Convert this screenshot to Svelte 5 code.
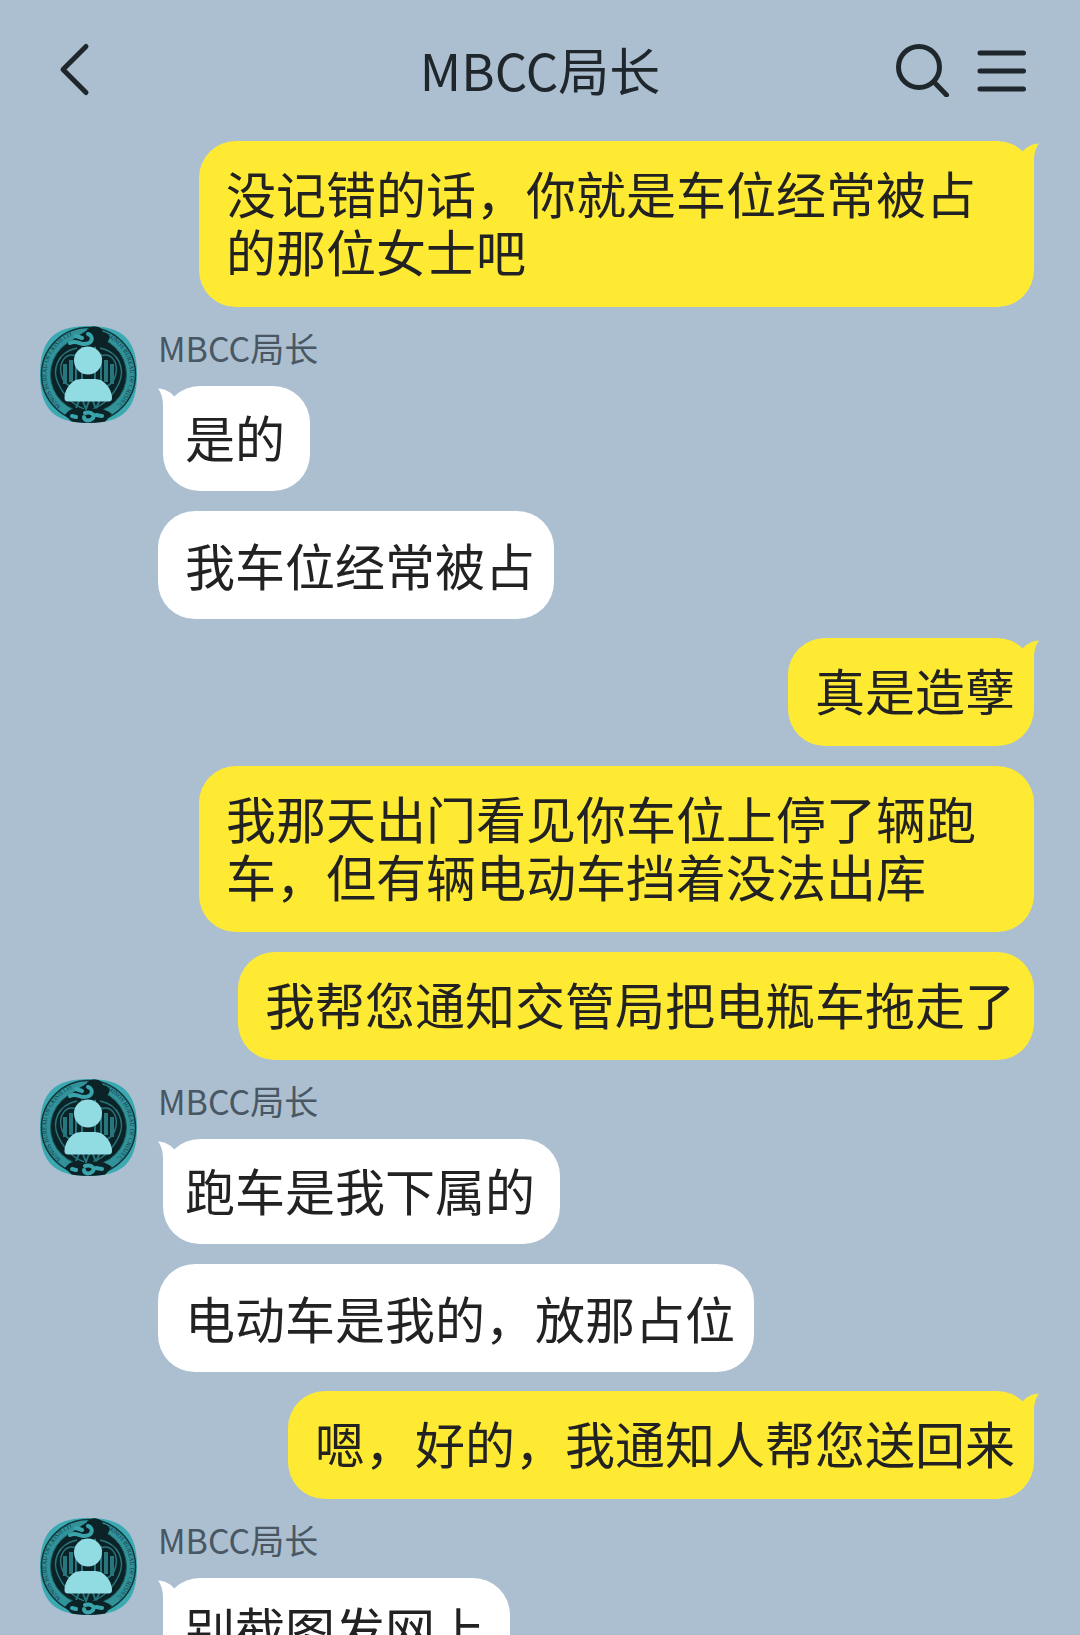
<script lang="ts">
  interface Group {
    from: "me" | "them";
    messages: string[];
  }

  const contact = "MBCC局长";

  const groups: Group[] = [
    { from: "me", messages: ["没记错的话，你就是车位经常被占的那位女士吧"] },
    { from: "them", messages: ["是的", "我车位经常被占"] },
    {
      from: "me",
      messages: [
        "真是造孽",
        "我那天出门看见你车位上停了辆跑车，但有辆电动车挡着没法出库",
        "我帮您通知交管局把电瓶车拖走了",
      ],
    },
    { from: "them", messages: ["跑车是我下属的", "电动车是我的，放那占位"] },
    { from: "me", messages: ["嗯，好的，我通知人帮您送回来"] },
    { from: "them", messages: ["别截图发网上"] },
  ];
</script>

<!-- shared avatar artwork -->
<svg class="sprite" aria-hidden="true">
  <defs>
    <clipPath id="squircle">
      <path d="M48.500 0C83 0 97 14 97 48.500S83 97 48.500 97 0 83 0 48.500 14 0 48.500 0Z" />
    </clipPath>
    <path id="arc-left" d="M21 80A42 42 0 0 1 31 10" />
    <path id="arc-right" d="M67 11A42 42 0 0 1 77 79" />
    <symbol id="avatar" viewBox="0 0 97 97">
      <g clip-path="url(#squircle)">
        <rect width="97" height="97" fill="#3ba9b1" />
        <circle cx="48.500" cy="48.500" r="47" fill="#31929a" stroke="#12353b" stroke-width="1.500" />
        <g class="motto">
          <text><textPath href="#arc-left">MINOS BUREAU OF CRISIS CONTROL</textPath></text>
          <text><textPath href="#arc-right">MINOS BUREAU OF CRISIS CONTROL</textPath></text>
        </g>
        <circle cx="48.500" cy="48.500" r="38" fill="#0b2226" stroke="#1b5a61" />
        <g fill="none" stroke="#27757d">
          <path stroke-width="4" d="M25 38v20M31 34v22M66 34v22M72 38v20" />
          <path
            stroke-width="1.500"
            d="M37 22C17 26 12 44 18 57S34 79 44 83M60 22C80 26 85 44 79 57S63 79 53 83M36 30C26 26 19 36 21 47S29 60 36 63M61 30C71 26 78 36 76 47S68 60 61 63"
          />
          <path stroke-width="2" d="M36 82l5-12 5 13 5-13 5 13 5-12M36 28v32M42 18v44M55 18v44M61 28v32" />
        </g>
        <path fill="#0b2226" d="M46 5c4-7 15-6 17 1 8 1 8 8 3 11-8 5-26 6-32 1-4-4 4-8 12-13ZM25 89c5-8 15-9 21-4 8-4 18-3 26 3l-9 10H34Z" />
        <g fill="none" stroke="#3aa4ad" stroke-width="4" stroke-linecap="round">
          <path d="M30 17c6-3 9 1 14 1 9 0 10-8 4-10M36 10l6 2" />
          <path d="M45 87c7-2 11 3 7 6s-8 1-8-2M36 91l-4-1M56 89l6 1" />
        </g>
        <g fill="#91dbe3">
          <circle cx="48" cy="34.500" r="14" />
          <path d="M41 53H55C65 53 72 64 72 72Q72 75.500 68.500 75.500H28Q24.500 75.500 24.500 72C24.500 64 31 53 41 53Z" />
        </g>
      </g>
    </symbol>
  </defs>
</svg>

<div class="chat">
  <header>
    <button class="back" aria-label="返回">
      <svg width="40" height="56" viewBox="0 0 40 56">
        <path d="M32 5.500 9 28.500l23 23" />
      </svg>
    </button>
    <h1>{contact}</h1>
    <div class="actions">
      <button aria-label="搜索">
        <svg width="56" height="56" viewBox="0 0 56 56">
          <circle cx="25" cy="26" r="20.500" />
          <path d="m40 41 12.500 13" />
        </svg>
      </button>
      <button aria-label="菜单">
        <svg width="52" height="56" viewBox="0 0 52 56">
          <path d="M6 12h43.500M6 30h43.500M6 48h43.500" />
        </svg>
      </button>
    </div>
  </header>

  <main>
    {#each groups as group}
      <section class="group {group.from}">
        {#if group.from === "them"}
          <svg class="avatar" role="img" aria-label={contact}><use href="#avatar" /></svg>
        {/if}
        <div class="messages">
          {#if group.from === "them"}
            <div class="name">{contact}</div>
          {/if}
          {#each group.messages as message, i}
            <p class="bubble" class:first={i === 0}>
              {message}
              {#if i === 0}
                <svg class="tail" width="25" height="40" viewBox="0 0 25 40" aria-hidden="true">
                  <path d="M8 11.500C12 6 18 3 25 2.500 21 8 20 14 20 20V40H0V20Z" />
                </svg>
              {/if}
            </p>
          {/each}
        </div>
      </section>
    {/each}
  </main>
</div>

<style>
  :global(body) {
    margin: 0;
    background: #abbfd0;
  }

  .sprite {
    position: absolute;
    width: 0;
    height: 0;
  }

  .motto {
    font-family: "Liberation Serif", serif;
    font-size: 6px;
    fill: #0f3a40;
  }

  .chat {
    display: flex;
    flex-direction: column;
    height: 100vh;
    background: #abbfd0;
    color: #222;
    font-family: "Noto Sans CJK SC", sans-serif;
  }

  header {
    display: grid;
    grid-template-columns: 1fr auto 1fr;
    align-items: center;
    flex-shrink: 0;
    height: 141px;
    padding: 0 54px 4px;
    box-sizing: border-box;
  }

  h1 {
    margin: 0;
    font-size: 51px;
    font-weight: 400;
    line-height: 60px;
    color: #20272c;
  }

  button {
    padding: 0;
    border: none;
    background: none;
    cursor: pointer;
  }

  button svg {
    display: block;
    fill: none;
    stroke: #20272c;
    stroke-width: 5;
    stroke-linecap: round;
    stroke-linejoin: round;
  }

  .back {
    justify-self: start;
  }

  .actions {
    display: flex;
    gap: 24px;
    justify-self: end;
  }

  main {
    display: flex;
    flex: 1;
    flex-direction: column;
    gap: 19px;
    min-height: 0;
    padding: 0 46px 0 40px;
    overflow-y: auto;
    scrollbar-width: none;
  }

  .group {
    display: flex;
    flex-shrink: 0;
    gap: 21px;
  }

  .avatar {
    flex-shrink: 0;
    width: 97px;
    height: 97px;
  }

  .messages {
    display: flex;
    flex: 1;
    flex-direction: column;
    align-items: flex-start;
    gap: 20px;
    min-width: 0;
  }

  .me .messages {
    align-items: flex-end;
  }

  .name {
    margin-bottom: -20px;
    height: 60px;
    font-size: 34px;
    line-height: 44px;
    color: #485763;
  }

  .bubble {
    position: relative;
    max-width: 84%;
    margin: 0;
    padding: 24px 19px 26px 27px;
    box-sizing: border-box;
    border-radius: 37px;
    background: #fff;
    font-size: 50px;
    line-height: 58px;
  }

  .me .bubble {
    padding-top: 22px;
    padding-bottom: 28px;
    background: #ffea33;
  }

  .them .first {
    margin-left: 5px;
    padding: 21px 25px 26px 22px;
  }

  .tail {
    position: absolute;
    top: 0;
    right: -5px;
    fill: #ffea33;
  }

  .them .tail {
    right: auto;
    left: -5px;
    transform: scaleX(-1);
    fill: #fff;
  }
</style>
